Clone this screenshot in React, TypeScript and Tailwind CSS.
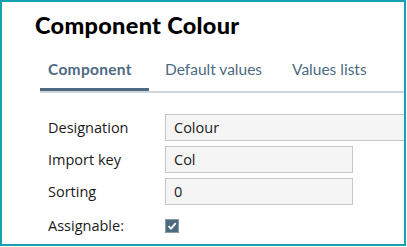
import React from 'react';

const Field = ({ label, value, wide }: { label: string; value: string; wide?: boolean }) => (
  <div className="flex items-center h-[27px]">
    <div className="w-[117px] shrink-0 text-[14.5px] text-[#1a1a1a]">{label}</div>
    <div
      className={`h-[27px] shrink-0 flex items-center pl-[8px] bg-[#f5f5f5] border border-[#c6c6c6] text-[14.5px] text-[#1a1a1a] ${wide ? 'w-[260px]' : 'w-[188px]'}`}
    >
      {value}
    </div>
  </div>
);

const App = () => {
  return (
    <div className="w-[407px] h-[247px] bg-white">
      <div
        className="w-[406px] h-[246px] border-2 border-[#17a2b0] overflow-hidden"
        style={{ fontFamily: '"Open Sans", sans-serif' }}
      >
        <h1
          className="pl-[33px] pt-[9px] text-[23.5px] leading-[29px] font-black tracking-[0.3px] text-black"
          style={{ fontFamily: 'Lato, sans-serif' }}
        >
          Component Colour
        </h1>
        <div className="ml-[38px] mt-[18px]" style={{ fontFamily: 'Lato, sans-serif' }}>
          <div className="flex items-end h-[33px] text-[15.5px] text-[#4c6a82]">
            <div className="w-[109px] h-[33px] pl-[8px] font-bold tracking-[0.3px] border-b-[3px] border-[#4d6b80]">
              Component
            </div>
            <div className="ml-[16px] h-[33px]">Default values</div>
            <div className="ml-[30px] h-[33px]">Values lists</div>
          </div>
          <div className="h-[2px] bg-[#cfd6dd]" />
        </div>
        <div className="ml-[46px] mt-[21px] flex flex-col gap-[5px]">
          <Field label="Designation" value="Colour" wide />
          <Field label="Import key" value="Col" />
          <Field label="Sorting" value="0" />
          <div className="flex items-center h-[27px] mt-[2px]">
            <div className="w-[117px] shrink-0 text-[14.5px] text-[#1a1a1a]">Assignable:</div>
            <div className="w-[14px] h-[14px] bg-[#4b6b7f] border border-[#8a9aa6] flex items-center justify-center">
              <svg width="10" height="10" viewBox="0 0 10 10">
                <path d="M1.5 5.2 L4 7.6 L8.7 2.2" fill="none" stroke="white" strokeWidth="1.8" />
              </svg>
            </div>
          </div>
        </div>
      </div>
    </div>
  );
};

export default App;
